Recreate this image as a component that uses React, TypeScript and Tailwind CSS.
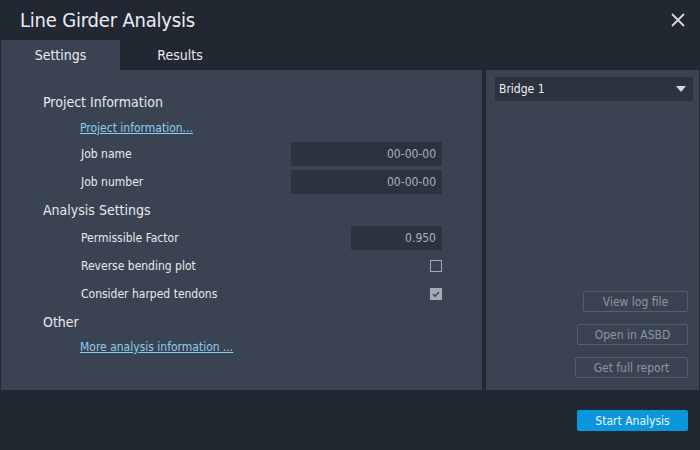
import React from "react";

const font = { fontFamily: "Tahoma, 'DejaVu Sans Condensed', 'DejaVu Sans', sans-serif" };

function Row({ label, children }: { label: string; children?: React.ReactNode }) {
  return (
    <div className="flex items-center h-[28px] pl-[80px] pr-[40px] justify-between">
      <span className="text-[12px] text-[#e6ebf0]">{label}</span>
      {children}
    </div>
  );
}

function Field({ value, w }: { value: string; w: string }) {
  return (
    <div className={`${w} h-[24px] bg-[#2c333e] flex items-center justify-end pr-[6px] text-[12px] text-[#a9b2bd]`}>
      {value}
    </div>
  );
}

function Btn({ label, w }: { label: string; w: string }) {
  return (
    <div className={`${w} h-[21px] border border-[#56606d] rounded-[2px] flex items-center justify-center text-[12px] text-[#8d97a3]`}>
      {label}
    </div>
  );
}

export default function App() {
  return (
    <div className="w-[700px] h-[450px] bg-[#222832] flex flex-col overflow-hidden" style={font}>
      <div className="h-[40px] flex items-center justify-between pl-[20px] pr-[14px]">
        <span className="text-[20px] text-[#e8edf2] tracking-[-0.2px]">Line Girder Analysis</span>
        <svg width="16" height="16" viewBox="0 0 16 16">
          <path d="M2 2 L14 14 M14 2 L2 14" stroke="#d5d9de" strokeWidth="1.8" />
        </svg>
      </div>
      <div className="h-[30px] flex pl-[1px]">
        <div className="w-[119px] bg-[#3a4351] flex items-center justify-center text-[14px] text-[#e6ebf0]">Settings</div>
        <div className="w-[120px] flex items-center justify-center text-[14px] text-[#e6ebf0]">Results</div>
      </div>
      <div className="h-[320px] flex gap-[4px] pl-[1px] pr-[1px]">
        <div className="w-[481px] bg-[#3a4351] pt-[18px] flex flex-col">
          <div className="h-[28px] flex items-center pl-[42px] text-[14px] text-[#e6ebf0]">Project Information</div>
          <div className="h-[24px] flex items-center pl-[79px]">
            <span className="text-[12px] text-[#8ccdf2] underline">Project information...</span>
          </div>
          <Row label="Job name"><Field value="00-00-00" w="w-[151px]" /></Row>
          <Row label="Job number"><Field value="00-00-00" w="w-[151px]" /></Row>
          <div className="h-[28px] flex items-center pl-[42px] text-[14px] text-[#e6ebf0]">Analysis Settings</div>
          <Row label="Permissible Factor"><Field value="0.950" w="w-[91px]" /></Row>
          <Row label="Reverse bending plot">
            <div className="w-[12px] h-[12px] border border-[#a3acb7]" />
          </Row>
          <Row label="Consider harped tendons">
            <div className="w-[12px] h-[12px] bg-[#a3acb7] flex items-center justify-center">
              <svg width="10" height="10" viewBox="0 0 10 10">
                <path d="M2 5.2 L4 7.2 L8 3" stroke="#4a5361" strokeWidth="1.8" fill="none" />
              </svg>
            </div>
          </Row>
          <div className="h-[28px] flex items-center pl-[42px] text-[14px] text-[#e6ebf0]">Other</div>
          <div className="h-[22px] flex items-center pl-[79px]">
            <span className="text-[12px] text-[#8ccdf2] underline">More analysis information ...</span>
          </div>
        </div>
        <div className="flex-1 bg-[#3a4351] flex flex-col pt-[7px] pl-[9px] pr-[6px] pb-[12px]">
          <div className="h-[24px] bg-[#2c333e] flex items-center justify-between pl-[4px] pr-[7px]">
            <span className="text-[12px] text-[#eef2f5]">Bridge 1</span>
            <svg width="10" height="6" viewBox="0 0 10 6"><path d="M0 0 H10 L5 6 Z" fill="#d5d9de" /></svg>
          </div>
          <div className="flex-1" />
          <div className="flex flex-col items-end gap-[12px] pr-[5px]">
            <Btn label="View log file" w="w-[105px]" />
            <Btn label="Open in ASBD" w="w-[111px]" />
            <Btn label="Get full report" w="w-[113px]" />
          </div>
        </div>
      </div>
      <div className="flex-1 flex items-center justify-end pr-[12px] pt-[1px]">
        <div className="w-[111px] h-[21px] bg-[#0996da] rounded-[2px] flex items-center justify-center text-[12px] text-[#eef6fb]">
          Start Analysis
        </div>
      </div>
    </div>
  );
}
